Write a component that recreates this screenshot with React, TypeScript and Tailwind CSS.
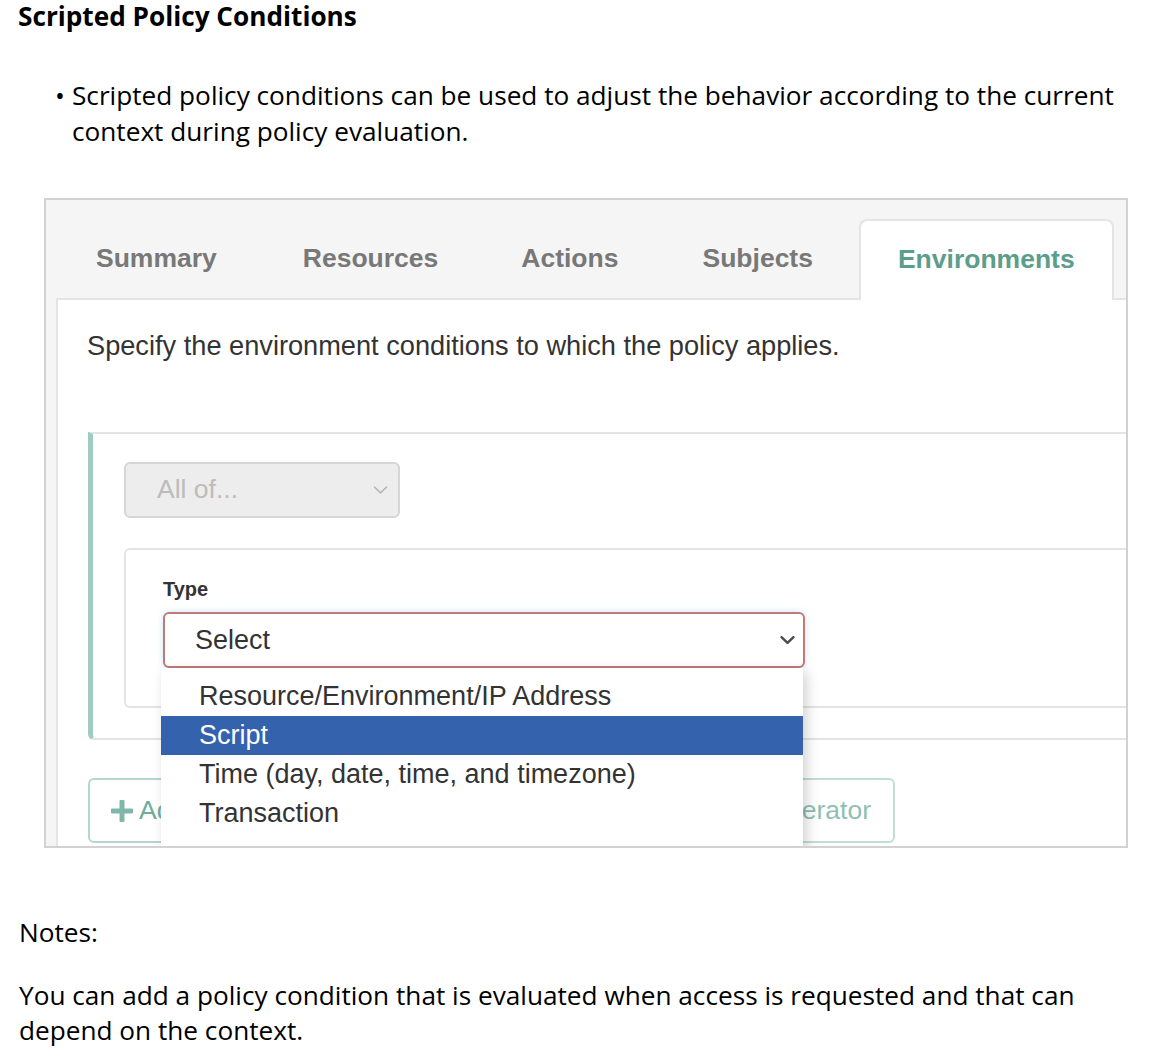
const tabs = [
  { label: "Summary", shift: "" },
  { label: "Resources", shift: "" },
  { label: "Actions", shift: "ml-[-3px]" },
  { label: "Subjects", shift: "ml-[-2px]" },
  { label: "Environments", shift: "" },
]
const options = [
  "Resource/Environment/IP Address",
  "Script",
  "Time (day, date, time, and timezone)",
  "Transaction",
]

function Chevron({ className, width = 2 }: { className: string; width?: number }) {
  return (
    <svg viewBox="0 0 15 8" className={className} fill="none" stroke="currentColor" strokeWidth={width} strokeLinecap="round" strokeLinejoin="round">
      <path d="M1.5 1.2 L7.5 6.8 L13.5 1.2" />
    </svg>
  )
}

function Plus({ className }: { className: string }) {
  return (
    <svg viewBox="0 0 22 22" className={className} fill="currentColor">
      <rect x="8.5" y="0" width="5" height="22" rx="1" />
      <rect x="0" y="8.5" width="22" height="5" rx="1" />
    </svg>
  )
}

export default function App() {
  return (
    <div className="w-[1160px] h-[1058px] bg-white text-black font-['Open_Sans',sans-serif]">
      <h2 className="pl-[18px] text-[26.2px] font-bold leading-[32px]">Scripted Policy Conditions</h2>

      <div className="mt-[45px] flex pl-[55px] pr-[30px] text-[26.2px] leading-[36px]">
        <span className="w-[17px] shrink-0">•</span>
        <p>
          Scripted policy conditions can be used to adjust the behavior according to the current context
          during policy evaluation.
        </p>
      </div>

      {/* Embedded screenshot */}
      <div className="mt-[49px] ml-[44px] w-[1084px] h-[650px] border-2 border-[#d2d2d2] bg-[#f5f5f5] overflow-hidden pl-[10px] font-['Liberation_Sans',Arial,sans-serif]">
        {/* Tabs */}
        <div className="flex items-end gap-[6px] pt-[19px] border-b-2 border-[#e4e4e4]">
          {tabs.map((t) => {
            const active = t.label === "Environments"
            return (
              <div
                key={t.label}
                className={
                  active
                    ? "h-[81px] -mb-[2px] pb-[2px] px-[37px] flex items-center bg-white border-2 border-b-0 border-[#e4e4e4] rounded-t-lg text-[26.5px] font-bold text-[#5c9d8b]"
                    : `${t.shift} h-[79px] px-[38px] flex items-center border-2 border-transparent text-[26.5px] font-bold text-[#787878]`
                }
              >
                {t.label}
              </div>
            )
          })}
        </div>

        {/* Panel */}
        <div className="h-full bg-white border-l-2 border-[#e4e4e4] pl-[30px] pt-[28px]">
          <p className="-ml-px text-[27.2px] leading-[36px] text-[#333333]">
            Specify the environment conditions to which the policy applies.
          </p>

          {/* Condition block */}
          <div className="mt-[68px] border-t-2 border-b-2 border-l-[5px] border-[#e4e4e4] border-l-[#9ecbc2] rounded-bl-md pl-[31px] pt-[28px] pb-[30px]">
            <div className="w-[276px] h-[56px] flex items-center justify-between pl-[31px] pr-[10px] bg-[#ededed] border-2 border-[#d6d6d6] rounded-md">
              <span className="text-[26.5px] text-[#bcbcbc]">All of...</span>
              <Chevron className="w-[15px] h-[8px] text-[#b8b8b8]" width={1.6} />
            </div>

            <div className="mt-[30px] h-[160px] border-2 border-r-0 border-[#e4e4e4] rounded-l-md pl-[37px] pt-[27px]">
              <div className="text-[20px] font-bold leading-[24px] text-[#333333]">Type</div>
              <div className="relative mt-[11px] w-[642px]">
                <div className="h-[56px] flex items-center justify-between pl-[30px] pr-[8px] bg-white border-2 border-[#c07a78] rounded-md shadow-[0_0_6px_rgba(102,175,233,0.35)]">
                  <span className="text-[27px] text-[#333333]">Select</span>
                  <Chevron className="w-[15px] h-[8px] text-[#4a4a4a]" width={2.4} />
                </div>
                {/* Open dropdown list */}
                <div className="absolute z-10 left-[-2px] top-full w-[642px] h-[200px] bg-white pt-[9px] shadow-[4px_4px_12px_rgba(0,0,0,0.18)]">
                  {options.map((o) => (
                    <div
                      key={o}
                      className={
                        o === "Script"
                          ? "h-[39px] flex items-center pl-[38px] bg-[#3562ad] text-white text-[27px]"
                          : "h-[39px] flex items-center pl-[38px] text-[#333333] text-[27px]"
                      }
                    >
                      {o}
                    </div>
                  ))}
                </div>
              </div>
            </div>
          </div>

          {/* Buttons (mostly hidden behind the dropdown) */}
          <div className="mt-[38px] w-[807px] flex justify-between">
            <div className="h-[65px] flex items-center pl-[21px] pr-[20px] border-2 border-[#b5d6ce] rounded-md text-[26.5px] text-[#6fac9e]">
              <Plus className="w-[22px] h-[22px] mr-[6px] text-[#80b7aa]" />
              Add Condition
            </div>
            <div className="h-[65px] flex items-center px-[22px] border-2 border-[#c2ddd6] rounded-md text-[26.5px] text-[#8fbfb4]">
              <Plus className="w-[22px] h-[22px] mr-[6px] text-[#a6cbc2]" />
              Add Operator
            </div>
          </div>
        </div>
      </div>

      <p className="mt-[66px] pl-[19px] text-[26.2px] leading-[36px]">Notes:</p>
      <p className="mt-[28px] pl-[19px] pr-[60px] text-[26.2px] leading-[35px]">
        You can add a policy condition that is evaluated when access is requested and that can depend on the
        context.
      </p>
    </div>
  )
}
